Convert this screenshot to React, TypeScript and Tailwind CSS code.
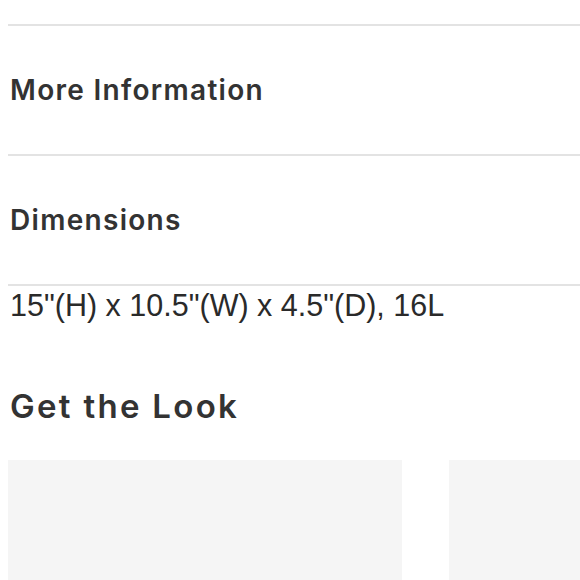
import React from "react";

const sections = ["More Information", "Dimensions"];

function App() {
  return (
    <div className="w-[580px] h-[580px] overflow-hidden bg-white text-[#333333] font-['Inter',sans-serif]">
      <div className="pt-6 pl-2">
        {sections.map((title) => (
          <div key={title} className="h-[130px] border-t-2 border-[#e3e3e3] flex items-center">
            <h3 className="pl-0.5 text-[28px] font-semibold leading-none tracking-[1.3px]">{title}</h3>
          </div>
        ))}
        <div className="border-t-2 border-[#e3e3e3]">
          <p className="pl-0.5 text-[30.5px] leading-[38px] font-['Liberation_Sans',sans-serif] text-[#2a2a2a]">
            15"(H) x 10.5"(W) x 4.5"(D), 16L
          </p>
        </div>
        <h2 className="pl-0.5 mt-[66px] text-[33px] font-semibold leading-none tracking-[2.3px]">Get the Look</h2>
        <div className="mt-[37px] flex gap-[47px]">
          <div className="w-[394px] h-[200px] shrink-0 bg-[#f5f5f5]" />
          <div className="w-[394px] h-[200px] shrink-0 bg-[#f5f5f5]" />
        </div>
      </div>
    </div>
  );
}

export default App;
